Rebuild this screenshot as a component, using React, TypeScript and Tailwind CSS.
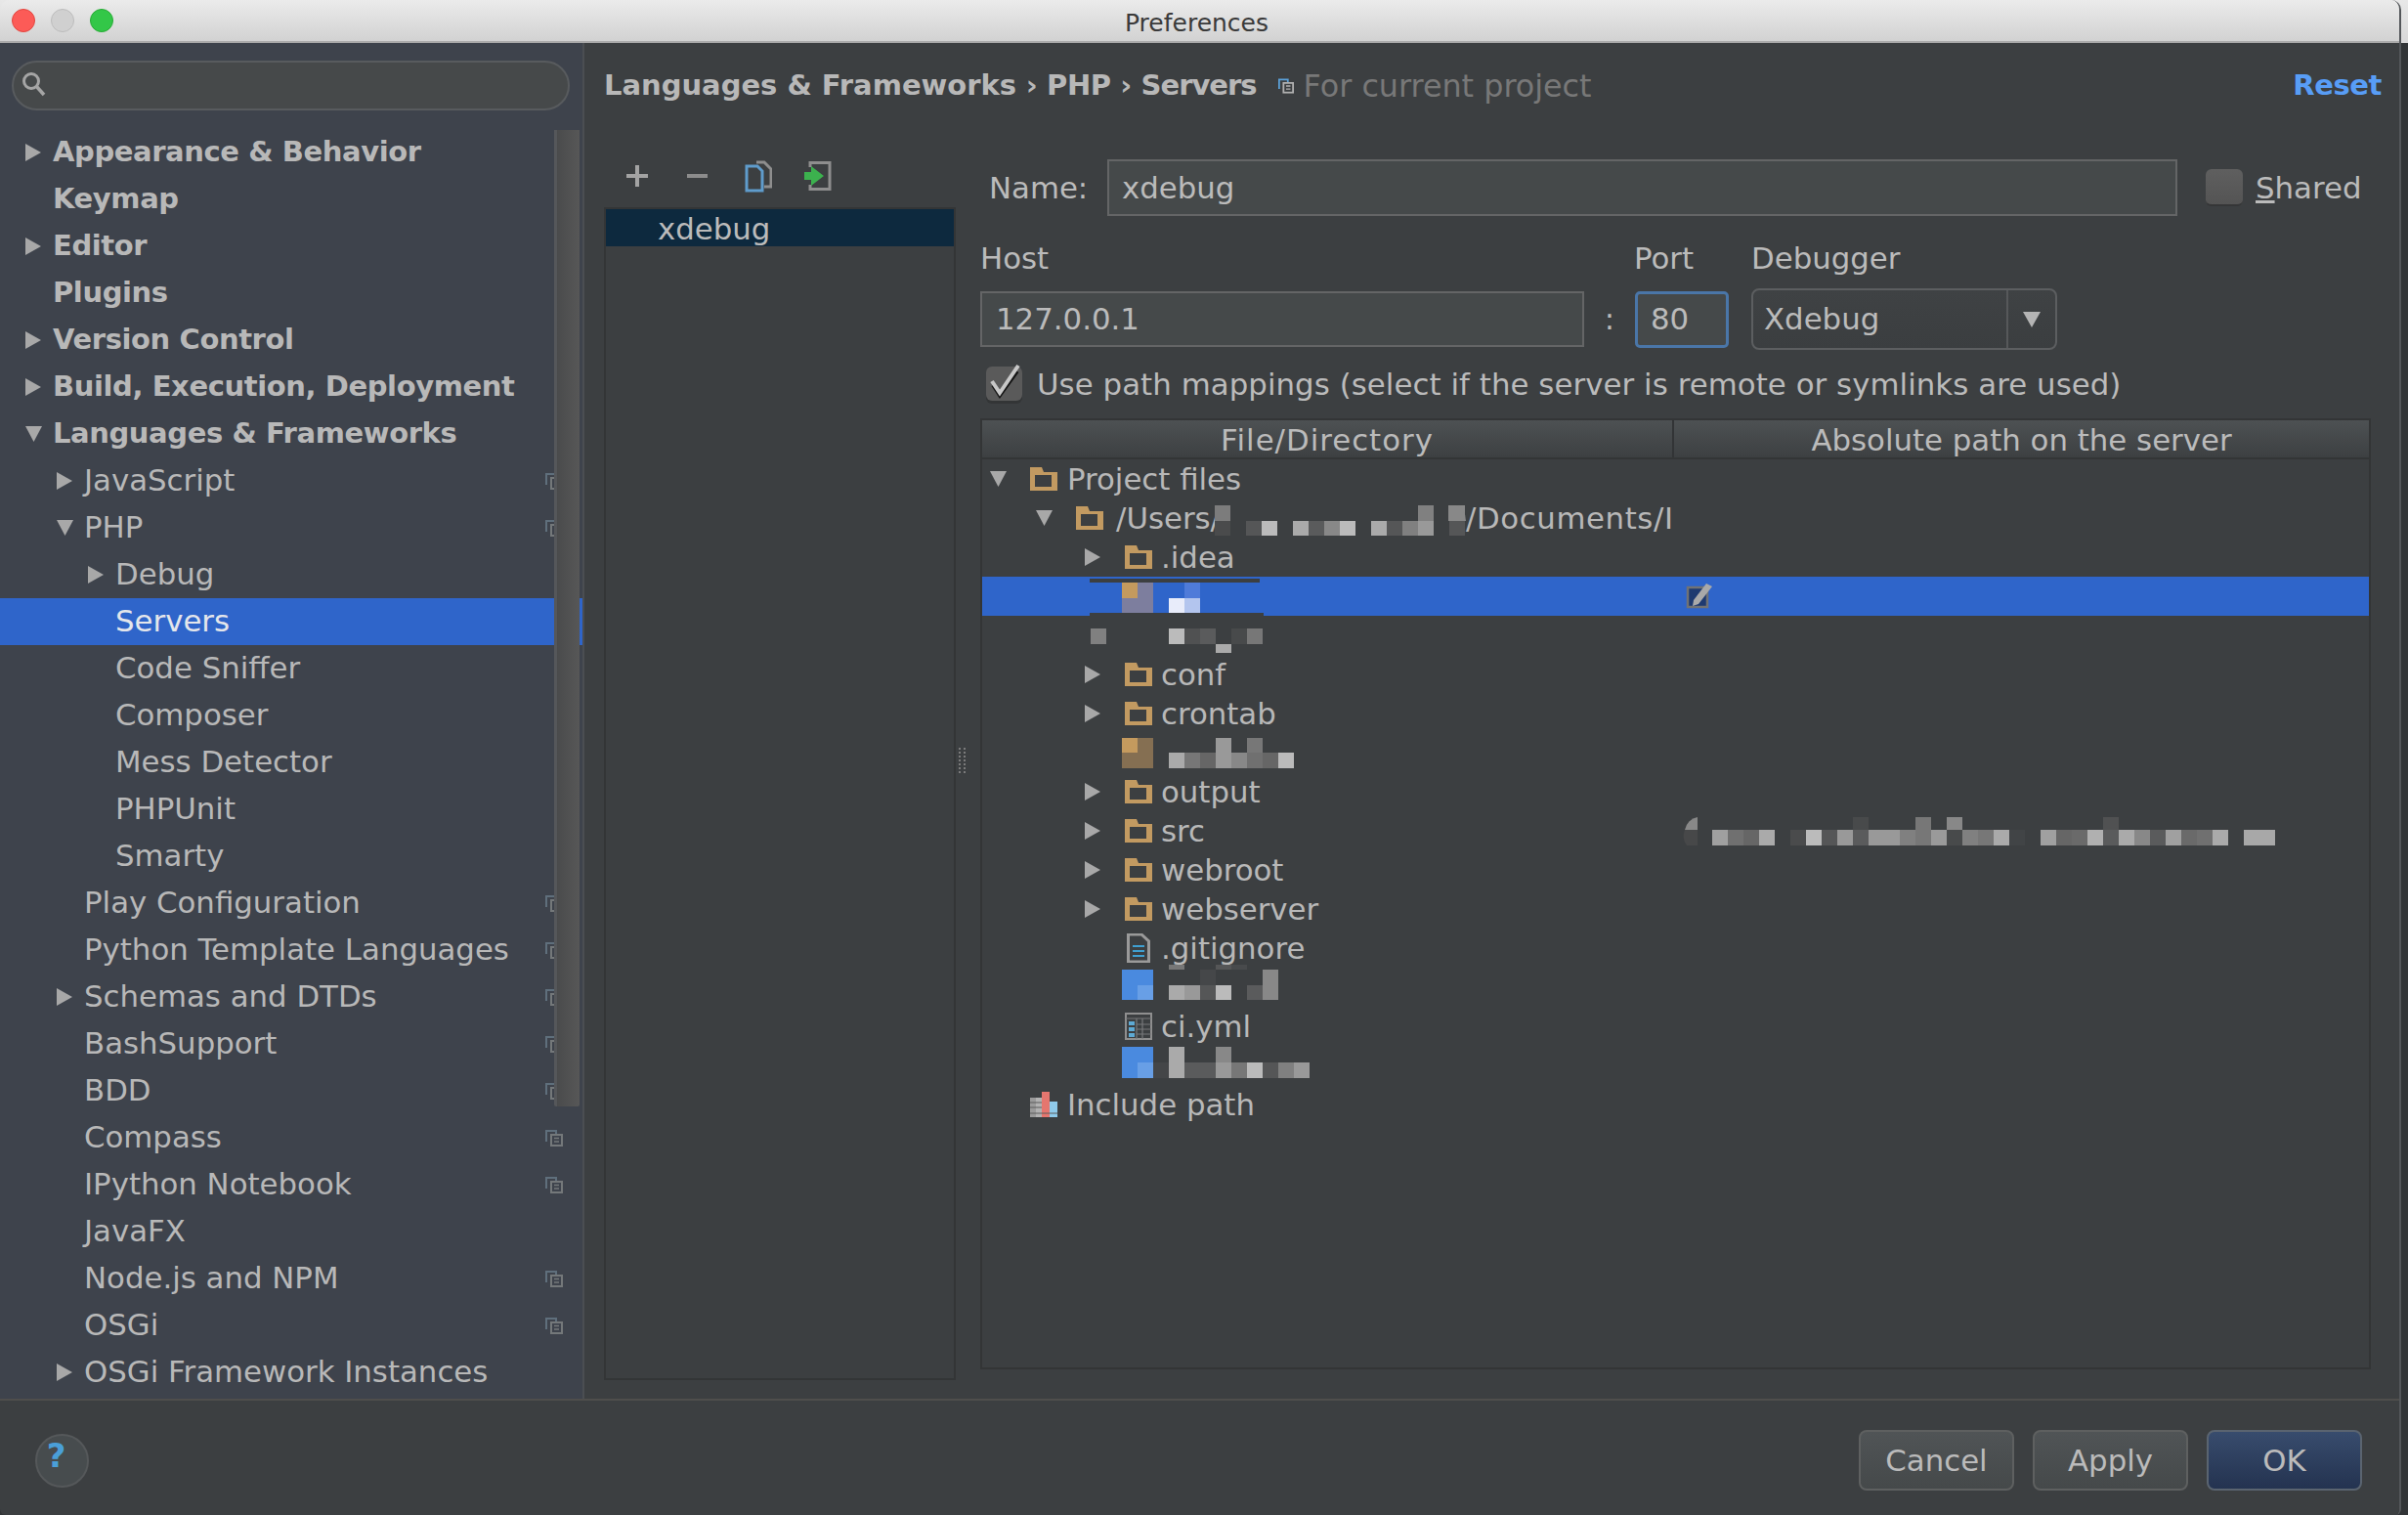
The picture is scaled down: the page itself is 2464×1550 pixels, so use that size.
import React from "react";

const font = "[font-family:'DejaVu_Sans',sans-serif]";
const reg = "text-[30.8px]";
const bold = "text-[29px] tracking-[-0.4px] font-bold";

function ArrowRight() {
  return (
    <svg width="16" height="18" viewBox="0 0 16 18" className="shrink-0">
      <path d="M0 0 L16 9 L0 18 Z" fill="#a8a8a8" />
    </svg>
  );
}

function ArrowDown() {
  return (
    <svg width="17" height="16" viewBox="0 0 17 16" className="shrink-0">
      <path d="M0 0 H17 L8.5 16 Z" fill="#a8a8a8" />
    </svg>
  );
}

function ConfigIcon() {
  return (
    <svg width="18" height="17" viewBox="0 0 18 17" className="shrink-0 ml-auto mr-[20px]">
      <path d="M1 12 V1 H11 V4" fill="none" stroke="#5f6f7c" strokeWidth="2" />
      <rect x="6" y="5" width="11" height="11" fill="none" stroke="#74787a" strokeWidth="2" />
      <path d="M9 8.5 H14 M9 12 H14" stroke="#74787a" strokeWidth="1.6" />
    </svg>
  );
}

type SideRow = { t: string; l: number; a?: "r" | "d"; b?: boolean; c?: boolean; s?: boolean };

const sideRows: SideRow[] = [
  { t: "Appearance & Behavior", l: 0, a: "r", b: true },
  { t: "Keymap", l: 0, b: true },
  { t: "Editor", l: 0, a: "r", b: true },
  { t: "Plugins", l: 0, b: true },
  { t: "Version Control", l: 0, a: "r", b: true },
  { t: "Build, Execution, Deployment", l: 0, a: "r", b: true },
  { t: "Languages & Frameworks", l: 0, a: "d", b: true },
  { t: "JavaScript", l: 1, a: "r", c: true },
  { t: "PHP", l: 1, a: "d", c: true },
  { t: "Debug", l: 2, a: "r" },
  { t: "Servers", l: 2, s: true },
  { t: "Code Sniffer", l: 2 },
  { t: "Composer", l: 2 },
  { t: "Mess Detector", l: 2 },
  { t: "PHPUnit", l: 2 },
  { t: "Smarty", l: 2 },
  { t: "Play Configuration", l: 1, c: true },
  { t: "Python Template Languages", l: 1, c: true },
  { t: "Schemas and DTDs", l: 1, a: "r", c: true },
  { t: "BashSupport", l: 1, c: true },
  { t: "BDD", l: 1, c: true },
  { t: "Compass", l: 1, c: true },
  { t: "IPython Notebook", l: 1, c: true },
  { t: "JavaFX", l: 1 },
  { t: "Node.js and NPM", l: 1, c: true },
  { t: "OSGi", l: 1, c: true },
  { t: "OSGi Framework Instances", l: 1, a: "r" },
];

const sideIndent = ["pl-[26px]", "pl-[58px]", "pl-[90px]"];

function Sidebar() {
  return (
    <div className="w-[598px] shrink-0 bg-[#3e434c] border-r-2 border-[#4b4e52] flex flex-col overflow-hidden">
      <div className="mt-[18px] mx-[12px] w-[571px] h-[51px] rounded-full bg-[#46494a] border-2 border-[#585b5e] flex items-center pl-[8px] pb-[4px] shrink-0">
        <svg width="26" height="26" viewBox="0 0 26 26">
          <circle cx="10" cy="10" r="7.5" fill="none" stroke="#a5a5a5" strokeWidth="3" />
          <path d="M15 15 L23 24" stroke="#a5a5a5" strokeWidth="3.5" />
        </svg>
      </div>
      <div className="relative mt-[19px]">
        {sideRows.map((r) => (
          <div
            key={r.t}
            className={`flex items-center h-[48px] ${sideIndent[r.l]} ${r.s ? "bg-[#2f65ca]" : ""}`}
          >
            <span className="w-[28px] shrink-0 flex items-center">
              {r.a === "r" && <ArrowRight />}
              {r.a === "d" && <ArrowDown />}
            </span>
            <span
              className={`whitespace-nowrap ${r.b ? bold : `${reg} pb-[2px]`} ${r.s ? "text-[#e4e6eb]" : "text-[#b8b8b8]"}`}
            >
              {r.t}
            </span>
            {r.c && <ConfigIcon />}
          </div>
        ))}
        <div className="absolute left-[567px] top-[1px] w-[26px] h-[999px] bg-gradient-to-r from-[#4a4b4c] to-[#575757] border-l-[3px] border-[#55575a] rounded-b-[2px]" />
      </div>
    </div>
  );
}

function Folder() {
  return (
    <svg width="28" height="24" viewBox="0 0 28 24" className="shrink-0">
      <path
        fillRule="evenodd"
        d="M0 0 H12 L14 5 H28 V24 H0 Z M5 8 V20 H22 V8 Z"
        fill="#c29a61"
      />
    </svg>
  );
}

function FileIcon() {
  return (
    <svg width="28" height="30" viewBox="0 0 28 30" className="shrink-0">
      <path d="M3.5 1 H17 L24.5 8 V29 H3.5 Z" fill="#3c3f41" stroke="#9a9a9a" strokeWidth="3" />
      <path d="M8 13 H20 M8 18 H20 M8 23 H20" stroke="#3f9fd0" strokeWidth="2.2" />
    </svg>
  );
}

function YamlIcon() {
  return (
    <svg width="28" height="28" viewBox="0 0 28 28" className="shrink-0">
      <rect x="1" y="1" width="26" height="26" fill="none" stroke="#8f8f8f" strokeWidth="2" />
      <path d="M1 6 H27 M12 6 V27 M18 6 V27 M12 12 H27 M12 17 H27 M12 22 H27" stroke="#77797b" strokeWidth="1.2" />
      <rect x="4" y="9" width="6" height="4" fill="#5eaad4" />
      <rect x="4" y="15" width="6" height="4" fill="#5eaad4" />
      <rect x="4" y="21" width="6" height="4" fill="#5eaad4" />
    </svg>
  );
}

function BooksIcon() {
  return (
    <svg width="28" height="26" viewBox="0 0 28 26" className="shrink-0">
      <rect x="0" y="6" width="6" height="20" fill="#9a9a9a" />
      <rect x="6" y="6" width="6" height="20" fill="#b2b2b2" />
      <rect x="12" y="0" width="8" height="26" fill="#e5766f" />
      <rect x="20" y="10" width="8" height="16" fill="#8fcaea" />
      <path d="M0 11 H12 M0 16 H12 M0 22 H28" stroke="#5c5c5c" strokeWidth="1" />
    </svg>
  );
}

type TreeRow = { t?: string; l: number; a?: "r" | "d"; i?: "folder" | "file" | "yaml" | "books"; s?: boolean };

const treeRows: TreeRow[] = [
  { t: "Project files", l: 0, a: "d", i: "folder" },
  { t: "/Users/", l: 1, a: "d", i: "folder" },
  { t: ".idea", l: 2, a: "r", i: "folder" },
  { l: 2, s: true },
  { l: 2 },
  { t: "conf", l: 2, a: "r", i: "folder" },
  { t: "crontab", l: 2, a: "r", i: "folder" },
  { l: 2 },
  { t: "output", l: 2, a: "r", i: "folder" },
  { t: "src", l: 2, a: "r", i: "folder" },
  { t: "webroot", l: 2, a: "r", i: "folder" },
  { t: "webserver", l: 2, a: "r", i: "folder" },
  { t: ".gitignore", l: 2, i: "file" },
  { l: 2 },
  { t: "ci.yml", l: 2, i: "yaml" },
  { l: 2 },
  { t: "Include path", l: 0, i: "books" },
];

const treeIndent = ["pl-[8px]", "pl-[55px]", "pl-[105px]"];
const treeGap = ["ml-[10px]", "ml-[13px]", "ml-[9px]"];

function Mosaic() {
  type B = [number, number, number, number, string];
  const row = (x0: number, y: number, h: number, cols: (string | null)[]): B[] =>
    cols.flatMap((c, k): B[] => (c ? [[x0 + k * 16, y, 16, h, c]] : []));
  const blocks: B[] = [
    ...row(1243, 533, 15, ["#4a4b4c", null, "#555657", "#bbbbbb", null, "#aaaaaa", "#5a5b5c", "#888888", "#bbbbbb", null, "#aaaaaa", "#555657", "#808080", "#999999", null, "#555657"]),
    ...row(1243, 517, 16, ["#7c7c7c", null, null, null, null, null, null, null, null, null, null, null, null, "#808080", null, "#888888"]),
    [1115, 592, 174, 4, "#3c3f41"],
    [1115, 627, 178, 3, "#3c3f41"],
    [1148, 596, 16, 16, "#c49a5e"],
    [1164, 596, 16, 16, "#7d7e9e"],
    [1148, 612, 32, 15, "#7d7e9e"],
    [1212, 596, 16, 16, "#4f7bd9"],
    [1196, 612, 16, 15, "#e8ecfa"],
    [1212, 612, 16, 15, "#b3c5ee"],
    [1116, 643, 16, 16, "#808080"],
    ...row(1196, 643, 16, ["#bbbbbb", "#505152", "#5a5b5c", null, "#484a4b", "#777777"]),
    [1244, 659, 16, 9, "#aaaaaa"],
    [1148, 755, 16, 15, "#c49a5e"],
    [1164, 755, 16, 15, "#856f52"],
    [1148, 770, 32, 16, "#856f52"],
    ...row(1196, 770, 16, ["#aaaaaa", "#777777", "#666666", "#999999", "#888888", "#707070", "#666666", "#bbbbbb"]),
    [1244, 755, 16, 15, "#999999"],
    [1276, 755, 16, 15, "#777777"],
    ...row(1752, 849, 16, ["#a0a0a0", "#707070", "#666666", "#aaaaaa", null, "#4a4b4c", "#bbbbbb", "#555657", "#999999", "#5a5b5c", "#999999", "#999999", "#808080", "#777777", "#9a9a9a", "#484a4b", "#808080", "#777777", "#aaaaaa", "#414446", null, "#a0a0a0", "#666666", "#6a6a6a", "#b0b0b0", "#5a5b5c", "#aaaaaa", "#888888", "#5a5b5c", "#a0a0a0", "#6a6a6a", "#707070", "#aaaaaa", null, "#a8a8a8", "#a8a8a8"]),
    [1896, 836, 16, 13, "#484a4b"],
    [1960, 836, 16, 13, "#777777"],
    [1992, 836, 16, 13, "#888888"],
    [2152, 836, 16, 13, "#505152"],
    [1148, 992, 32, 31, "#4a8adf"],
    [1164, 1008, 16, 15, "#689fe6"],
    ...row(1196, 1008, 15, ["#aaaaaa", "#999999", "#555657", "#bbbbbb", null, "#5a5b5c", "#888888"]),
    [1228, 992, 16, 16, "#454749"],
    [1292, 992, 16, 16, "#888888"],
    [1196, 987, 16, 5, "#777777"],
    [1244, 987, 16, 5, "#555657"],
    [1260, 987, 16, 5, "#484a4c"],
    [1148, 1071, 32, 32, "#4a8adf"],
    [1164, 1087, 16, 16, "#689fe6"],
    ...row(1180, 1087, 16, ["#444648", "#aaaaaa", "#5a5b5c", "#5a5b5c", "#999999", "#777777", "#bbbbbb", "#555657", "#808080", "#999999"]),
    [1196, 1071, 16, 16, "#aaaaaa"],
    [1244, 1071, 16, 16, "#888888"],
  ];
  return (
    <svg width="1422" height="932" className="absolute left-0 top-0 pointer-events-none">
      <g transform="translate(-1005 -470)">
        {blocks.map((b, i) => (
          <rect key={i} x={b[0]} y={b[1]} width={b[2]} height={b[3]} fill={b[4]} />
        ))}
        <path d="M1482 517 H1490 A12 16 0 0 1 1500 533 H1482 Z" fill="#888888" />
        <path d="M1737 836 A16 16 0 0 0 1724 849 H1737 Z" fill="#888888" />
        <path d="M1724 849 A16 16 0 0 0 1726 865 H1737 V849 Z" fill="#474849" />
        <rect x="1727" y="601" width="20" height="20" fill="#1e3a70" stroke="#707274" strokeWidth="2.5" />
        <path d="M1733 614 L1746 597 L1752 600 L1738 618 L1732 620 Z" fill="#a9a9a9" />
      </g>
    </svg>
  );
}

function Tree() {
  return (
    <div className="relative flex-1 min-h-0 overflow-hidden">
      {treeRows.map((r, i) => (
        <div
          key={i}
          className={`flex items-center h-[40px] ${treeIndent[r.l]} ${r.s ? "bg-[#2f65ca]" : ""}`}
        >
          <span className="w-[17px] shrink-0 flex items-center">
            {r.a === "r" && <ArrowRight />}
            {r.a === "d" && <ArrowDown />}
          </span>
          <span className="w-[28px] ml-[24px] shrink-0 flex items-center">
            {r.i === "folder" && <Folder />}
            {r.i === "file" && <FileIcon />}
            {r.i === "yaml" && <YamlIcon />}
            {r.i === "books" && <BooksIcon />}
          </span>
          {r.t && <span className={`${treeGap[r.l]} ${reg} text-[#b8b8b8] whitespace-nowrap`}>{r.t}</span>}
        </div>
      ))}
      <div className={`absolute left-[495px] top-[40px] h-[40px] flex items-center ${reg} tracking-[0.6px] text-[#b8b8b8] whitespace-nowrap`}>
        /Documents/I
      </div>
      <Mosaic />
    </div>
  );
}

const fieldCls = `bg-[#45494a] border-2 border-[#646566] flex items-center ${reg} text-[#bbbbbb]`;

function Toolbar() {
  return (
    <div className="h-[80px] shrink-0 flex items-center pl-[23px] pt-[16px]">
      <svg width="22" height="22" viewBox="0 0 22 22">
        <path d="M11 0 V22 M0 11 H22" stroke="#a3a3a3" strokeWidth="4" />
      </svg>
      <svg width="21" height="22" viewBox="0 0 21 22" className="ml-[40px]">
        <path d="M0 11 H21" stroke="#8c8c8c" strokeWidth="4" />
      </svg>
      <svg width="28" height="33" viewBox="0 0 28 33" className="ml-[38px]">
        <path d="M12 2 H20 L27 9 V27 H20" fill="none" stroke="#8e8e8e" strokeWidth="3" />
        <path d="M2 6 H13 L18 11 V31 H2 Z" fill="#3c3f41" stroke="#5f9ccc" strokeWidth="3" />
      </svg>
      <svg width="28" height="30" viewBox="0 0 28 30" className="ml-[33px]">
        <path d="M6 6 V1.5 H26 V28.5 H6 V24" fill="none" stroke="#8e8e8e" strokeWidth="3" />
        <path d="M0 11 H7 V5 L20 15 L7 25 V19 H0 Z" fill="#3cb14e" />
      </svg>
    </div>
  );
}

function Form() {
  return (
    <div className="w-[1423px] ml-[25px] flex flex-col shrink-0 pb-[30px]">
      <div className="flex items-center mt-[31px] h-[58px]">
        <span className={`w-[130px] pl-[9px] ${reg} text-[#bbbbbb]`}>Name:</span>
        <div className={`${fieldCls} w-[1095px] h-[58px] pl-[13px]`}>xdebug</div>
        <span className="ml-[29px] w-[38px] h-[38px] rounded-[6px] bg-gradient-to-b from-[#5f5f5f] to-[#545454] border-b-2 border-[#353637] shrink-0" />
        <span className={`ml-[13px] ${reg} text-[#bbbbbb] whitespace-nowrap`}>
          <span className="underline">S</span>hared
        </span>
      </div>
      <div className="flex">
        <div className="w-[618px] flex flex-col">
          <span className={`mt-[23px] h-[51px] ${reg} text-[#bbbbbb] leading-[40px]`}>Host</span>
          <div className="h-[63px] flex items-center">
            <div className={`${fieldCls} w-full h-[57px] pl-[14px]`}>127.0.0.1</div>
          </div>
        </div>
        <div className="w-[52px] flex flex-col">
          <span className={`mt-[74px] h-[63px] flex items-center justify-center ${reg} text-[#bbbbbb]`}>:</span>
        </div>
        <div className="w-[96px] flex flex-col">
          <span className={`mt-[23px] h-[51px] -ml-[1px] ${reg} text-[#bbbbbb] leading-[40px]`}>Port</span>
          <div className="h-[63px] flex items-center">
            <div className={`w-full h-[58px] bg-[#45494a] border-[3px] border-[#4a76a8] rounded-[5px] flex items-center pl-[13px] ${reg} text-[#bbbbbb]`}>
              80
            </div>
          </div>
        </div>
        <div className="w-[313px] ml-[23px] flex flex-col">
          <span className={`mt-[23px] h-[51px] ${reg} text-[#bbbbbb] leading-[40px]`}>Debugger</span>
          <div className="h-[63px] rounded-[8px] border-2 border-[#5c5e60] bg-gradient-to-b from-[#3f4244] to-[#3b3e40] flex items-center">
            <span className={`flex-1 pl-[11px] ${reg} text-[#bbbbbb]`}>Xdebug</span>
            <span className="w-[50px] h-full border-l-2 border-[#56585a] flex items-center justify-center">
              <svg width="18" height="16" viewBox="0 0 18 16">
                <path d="M0 0 H18 L9 16 Z" fill="#b4b4b4" />
              </svg>
            </span>
          </div>
        </div>
      </div>
      <div className="flex items-center h-[70px] pl-[5px]">
        <svg width="40" height="42" viewBox="0 0 40 42" className="shrink-0">
          <rect x="1" y="4" width="37" height="37" rx="6" fill="#333536" />
          <rect x="1" y="3" width="37" height="35" rx="6" fill="#5a5a5a" />
          <path d="M8 22 L15 33 L33 8" fill="none" stroke="#141414" strokeWidth="3.5" />
          <path d="M7 18 L15 30 L34 2" fill="none" stroke="#c8c8c8" strokeWidth="4" />
        </svg>
        <span className={`ml-[13px] ${reg} tracking-[0.06px] text-[#bbbbbb] whitespace-nowrap`}>
          Use path mappings (select if the server is remote or symlinks are used)
        </span>
      </div>
      <div className="flex-1 min-h-0 flex flex-col border-2 border-[#333536]">
        <div className={`h-[40px] shrink-0 flex border-b-2 border-[#333536] bg-gradient-to-b from-[#4d5153] to-[#3d4042] ${reg} text-[#bbbbbb]`}>
          <div className="w-[708px] flex items-center justify-center pt-[2px] tracking-[1px] border-r-2 border-[#323436]">File/Directory</div>
          <div className="flex-1 flex items-center justify-center pt-[2px]">Absolute path on the server</div>
        </div>
        <Tree />
      </div>
    </div>
  );
}

export default function App() {
  return (
    <div className={`w-[2464px] h-[1550px] bg-[linear-gradient(#e8e8e8_0,#d8d8d8_44px,#323537_44px)] overflow-hidden ${font}`}>
      <div className="w-[2457px] h-[1550px] flex flex-col rounded-t-[10px] rounded-b-[6px] overflow-hidden border-r-2 border-[#54575a]">
        <div className="h-[44px] shrink-0 bg-gradient-to-b from-[#ebebeb] to-[#d2d2d2] border-b-2 border-[#a9a9a9] flex items-center relative">
          <div className="flex items-center gap-[16px] pl-[12px]">
            <span className="w-[24px] h-[24px] rounded-full bg-[#fc5b57] border border-[#e2463f]" />
            <span className="w-[24px] h-[24px] rounded-full bg-[#d0d0d0] border border-[#bcbcbc]" />
            <span className="w-[24px] h-[24px] rounded-full bg-[#33c748] border border-[#27aa35]" />
          </div>
          <span className="absolute left-0 right-[6px] top-[5px] text-center text-[25px] text-[#3a3a3a]">Preferences</span>
        </div>
        <div className="flex-1 min-h-0 flex">
          <Sidebar />
          <div className="flex-1 min-w-0 flex flex-col bg-[#3c3f41] relative">
            <div className="h-[88px] shrink-0 flex items-center pl-[20px] pr-[18px]">
              <span className="text-[29px] font-bold text-[#b8b8b8] whitespace-nowrap">
                Languages & Frameworks
                <span className="tracking-[-0.4px]"> › PHP › </span>
                <span className="tracking-[-1px]">Servers</span>
              </span>
              <svg width="16" height="18" viewBox="0 0 18 17" className="ml-[22px]">
                <path d="M1 12 V1 H11 V4" fill="none" stroke="#5aa0d8" strokeWidth="2" />
                <rect x="6" y="5" width="11" height="11" fill="none" stroke="#b0b0b0" strokeWidth="2" />
                <path d="M9 8.5 H14 M9 12 H14" stroke="#b0b0b0" strokeWidth="1.6" />
              </svg>
              <span className="ml-[10px] text-[31.8px] text-[#787878] whitespace-nowrap">For current project</span>
              <span className={`ml-auto ${bold} text-[#589df6]`}>Reset</span>
            </div>
            <div className="flex-1 min-h-0 flex pl-[20px]">
              <div className="w-[360px] shrink-0 flex flex-col pb-[19px]">
                <Toolbar />
                <div className="flex-1 border-2 border-[#333536]">
                  <div className={`h-[38px] bg-[#0d293e] flex items-center pl-[53px] pt-[2px] ${reg} text-[#bbbbbb]`}>xdebug</div>
                </div>
              </div>
              <Form />
            </div>
            <svg width="8" height="28" viewBox="0 0 8 28" className="absolute left-[383px] top-[720px]">
              <path d="M1 1 V27 M6 1 V27" stroke="#7b7b7b" strokeWidth="2" strokeDasharray="2 2" />
            </svg>
          </div>
        </div>
        <div className="h-[119px] shrink-0 border-t-2 border-[#4f4e4c] flex items-center pr-[38px] pl-[36px] pt-[5px] bg-[#3c3f41]">
          <div className="w-[55px] h-[55px] rounded-full bg-[#474c4e] border-2 border-[#55585a] flex items-center justify-center pr-[12px] pb-[10px] text-[34px] font-bold text-[#4a9fd8]">
            ?
          </div>
          <button className={`ml-auto w-[159px] h-[62px] rounded-[8px] border-2 border-[#5e6060] bg-gradient-to-b from-[#505456] to-[#45494a] ${reg} text-[#bbbbbb]`}>
            Cancel
          </button>
          <button className={`ml-[19px] w-[159px] h-[62px] rounded-[8px] border-2 border-[#5e6060] bg-gradient-to-b from-[#505456] to-[#45494a] ${reg} text-[#bbbbbb]`}>
            Apply
          </button>
          <button className={`ml-[19px] w-[159px] h-[62px] rounded-[8px] border-2 border-[#5a6470] bg-gradient-to-b from-[#384c6d] to-[#243350] ${reg} text-[#bbbbbb]`}>
            OK
          </button>
        </div>
      </div>
    </div>
  );
}
